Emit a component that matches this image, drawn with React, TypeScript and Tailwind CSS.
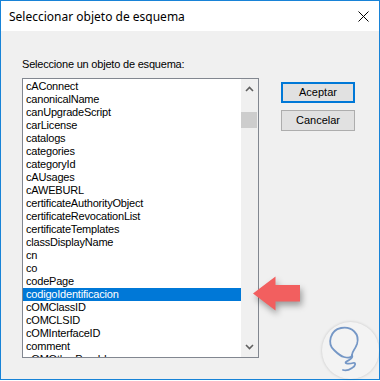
import React from "react";

const items = [
  "cAConnect",
  "canonicalName",
  "canUpgradeScript",
  "carLicense",
  "catalogs",
  "categories",
  "categoryId",
  "cAUsages",
  "cAWEBURL",
  "certificateAuthorityObject",
  "certificateRevocationList",
  "certificateTemplates",
  "classDisplayName",
  "cn",
  "co",
  "codePage",
  "codigoIdentificacion",
  "cOMClassID",
  "cOMCLSID",
  "cOMInterfaceID",
  "comment",
  "cOMOtherProgId",
];

const selected = "codigoIdentificacion";

export default function App() {
  return (
    <div className="w-[380px] h-[381px] bg-white">
      <div className="w-[380px] h-[380px] border border-[#1883d7] flex flex-col">
        {/* title bar */}
        <div className="h-[30px] bg-white flex items-center justify-between pl-[8px] pr-[10px] font-['Noto_Sans',sans-serif] text-[12px] text-black">
          <span className="mt-[1px]">Seleccionar objeto de esquema</span>
          <svg width="11" height="11" viewBox="0 0 11 11">
            <path d="M0.5 0.5 L10.5 10.5 M10.5 0.5 L0.5 10.5" stroke="#000" strokeWidth="1" />
          </svg>
        </div>

        {/* body */}
        <div className="flex-1 bg-[#f0f0f0] relative pl-[21px] pt-[27px] font-['Liberation_Sans',Arial,sans-serif] text-[11px] text-black">
          <div className="flex">
            <div className="flex flex-col tracking-[-0.2px]">
              <div className="h-[20px] leading-[13px]">Seleccione un objeto de esquema:</div>
              <div className="w-[237px] h-[280px] border border-[#828790] bg-white flex">
                <div className="flex-1 pt-[1px] overflow-hidden">
                  {items.map((it) => (
                    <div
                      key={it}
                      className={
                        it === selected
                          ? "h-[13px] leading-[13px] pl-[3px] bg-[#0078d7] text-white"
                          : "h-[13px] leading-[13px] pl-[3px]"
                      }
                    >
                      {it}
                    </div>
                  ))}
                </div>
                <div className="w-[17px] bg-[#f0f0f0] flex flex-col">
                  <div className="h-[17px] flex items-center justify-center">
                    <svg width="9" height="6" viewBox="0 0 9 6" className="mt-[3px]">
                      <path d="M1 5 L4.5 1.5 L8 5" fill="none" stroke="#606060" strokeWidth="1.6" />
                    </svg>
                  </div>
                  <div className="h-[16px] mt-[16px] mr-[1px] bg-[#cdcdcd]" />
                  <div className="flex-1" />
                  <div className="h-[17px] flex items-center justify-center">
                    <svg width="9" height="6" viewBox="0 0 9 6" className="mb-[3px]">
                      <path d="M1 1 L4.5 4.5 L8 1" fill="none" stroke="#606060" strokeWidth="1.6" />
                    </svg>
                  </div>
                </div>
              </div>
            </div>

            <div className="flex flex-col ml-[22px] mt-[24px] gap-[7px]">
              <button className="w-[74px] h-[21px] border-2 border-[#0078d7] bg-[#e1e1e1] leading-[17px] text-center">
                Aceptar
              </button>
              <button className="w-[74px] h-[21px] border border-[#adadad] bg-[#e1e1e1] leading-[19px] text-center">
                Cancelar
              </button>
            </div>
          </div>

          {/* red arrow */}
          <svg
            width="60"
            height="50"
            viewBox="0 0 60 50"
            className="absolute left-[248px] top-[242px] drop-shadow-[2px_4px_3px_rgba(0,0,0,0.35)]"
          >
            <polygon
              points="4,20.5 26.5,3.5 26.5,12 51,12 51,28.5 26.5,28.5 26.5,37.5"
              fill="#f25f5f"
            />
          </svg>

          {/* logo */}
          <div className="absolute left-[321px] top-[291px] w-[57px] h-[57px] rounded-full bg-[#f3f3f3] shadow-[0_0_3px_rgba(0,0,0,0.18)]">
            <svg width="57" height="57" viewBox="0 0 57 57">
              <path
                d="M12 28 C5 22 8 8 19 6 C30 4 38 12 35 22 C33 28 30 29 30 33 C30 36 26 36 22 35 C18 34 15 31 12 28 Z"
                fill="none"
                stroke="#7597c6"
                strokeWidth="1.8"
                strokeLinejoin="round"
              />
              <path
                d="M30 33 C32 37 26 38 24 40 C22 42 28 42 31 41 C34 40 34 44 30 46 C27 48 24 49 21 48"
                fill="none"
                stroke="#7597c6"
                strokeWidth="1.8"
                strokeLinecap="round"
              />
            </svg>
          </div>
        </div>
      </div>
    </div>
  );
}
